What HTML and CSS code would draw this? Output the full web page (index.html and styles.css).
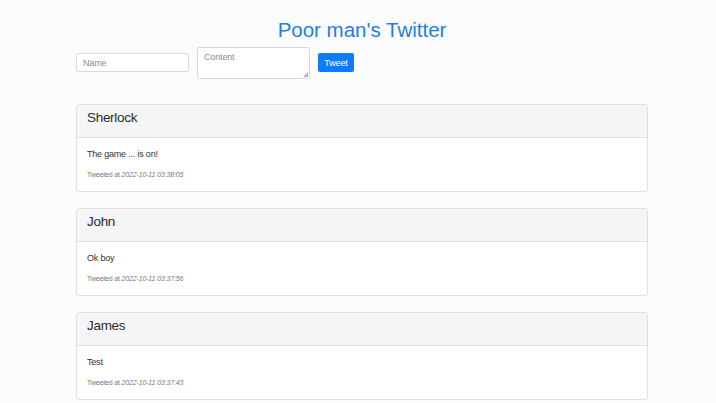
FILE: index.html
```html
<!DOCTYPE html>
<html>
<head>
<meta charset="utf-8">
<link rel="stylesheet" href="styles.css">
</head>
<body>
<div class="container">
  <h1 class="title">Poor man's Twitter</h1>
  <form class="form">
    <input class="input" type="text" placeholder="Name">
    <span class="ta-wrap">
      <textarea class="textarea" placeholder="Content"></textarea>
      <span class="grip"></span>
    </span>
    <button class="btn" type="button">Tweet</button>
  </form>
  <div class="list">
    <div class="card">
      <div class="card-header">Sherlock</div>
      <div class="card-body">
        <p class="text">The game ... is on!</p>
        <p class="meta">Tweeted at <em>2022-10-11 03:38:05</em></p>
      </div>
    </div>
    <div class="card">
      <div class="card-header">John</div>
      <div class="card-body">
        <p class="text">Ok boy</p>
        <p class="meta">Tweeted at <em>2022-10-11 03:37:56</em></p>
      </div>
    </div>
    <div class="card">
      <div class="card-header">James</div>
      <div class="card-body">
        <p class="text">Test</p>
        <p class="meta">Tweeted at <em>2022-10-11 03:37:43</em></p>
      </div>
    </div>
  </div>
</div>
</body>
</html>
```
FILE: styles.css
```css
html, body {
  margin: 0;
  padding: 0;
  background: #fcfcfd;
  font-family: "Liberation Sans", Arial, sans-serif;
  color: #333;
}
body {
  padding-left: 8px;
}
.container {
  width: 572px;
  margin: 0 auto;
  padding-top: 16px;
}
.title {
  margin: 0;
  text-align: center;
  font-weight: normal;
  font-size: 20.5px;
  line-height: 28px;
  color: #1a80e8;
}
.form {
  display: flex;
  align-items: flex-start;
  gap: 8px;
  margin-top: 3px;
}
.input {
  box-sizing: border-box;
  width: 113px;
  height: 19px;
  margin-top: 6px;
  border: 1px solid #d9d9db;
  border-radius: 2px;
  padding: 0 6px;
  font-family: inherit;
  font-size: 9px;
  letter-spacing: -0.15px;
  color: #444;
  background: #fff;
  outline: none;
}
.ta-wrap {
  position: relative;
  display: block;
  width: 113px;
  height: 32px;
}
.textarea {
  display: block;
  box-sizing: border-box;
  width: 113px;
  height: 32px;
  margin: 0;
  border: 1px solid #d9d9db;
  border-radius: 2px;
  padding: 4px 6px;
  font-family: inherit;
  font-size: 9px;
  letter-spacing: -0.15px;
  line-height: 11px;
  background: #fff;
  resize: none;
  outline: none;
}
.grip {
  position: absolute;
  right: 2px;
  bottom: 2px;
  width: 0;
  height: 0;
  border-left: 5px solid transparent;
  border-bottom: 5px solid #b5b5b7;
}
.input::placeholder, .textarea::placeholder {
  color: #8c8c8c;
}
.btn {
  box-sizing: border-box;
  height: 19px;
  width: 36px;
  margin-top: 6px;
  border: none;
  border-radius: 2px;
  background: #0d7bfd;
  color: #fff;
  font-family: inherit;
  font-size: 9px;
  letter-spacing: -0.15px;
  padding: 0;
}
.list {
  display: flex;
  flex-direction: column;
  gap: 16px;
  margin-top: 25px;
}
.card {
  border: 1px solid #e0e0e2;
  border-radius: 3px;
  background: #fff;
  overflow: hidden;
}
.card-header {
  height: 33px;
  box-sizing: border-box;
  padding: 0 10px;
  background: #f5f5f6;
  border-bottom: 1px solid #e0e0e2;
  font-size: 13.5px;
  letter-spacing: -0.3px;
  line-height: 26px;
  color: #2b2b2b;
}
.card-body {
  padding: 10px 10px 11px;
}
.text {
  margin: 0;
  font-size: 9px;
  letter-spacing: -0.2px;
  line-height: 12px;
  color: #333;
}
.meta {
  margin: 10px 0 0;
  font-size: 7px;
  letter-spacing: -0.15px;
  line-height: 10px;
  color: #777;
}
.meta em {
  font-style: italic;
}
```
